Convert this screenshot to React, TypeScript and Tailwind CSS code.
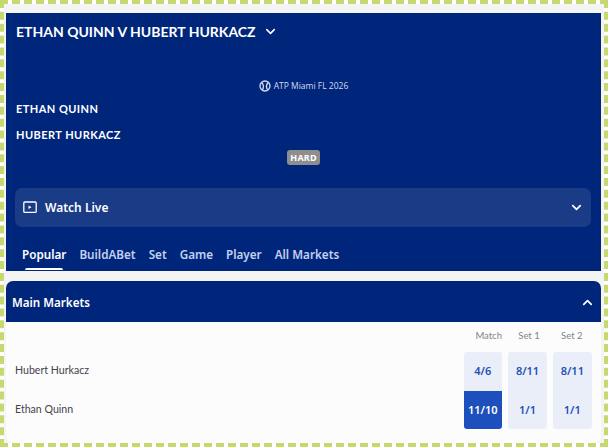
import React from 'react';
import { ChevronDown, ChevronUp } from 'lucide-react';

const tabs = ['Popular', 'BuildABet', 'Set', 'Game', 'Player', 'All Markets'];

const rows = [
  { name: 'Hubert Hurkacz', prices: ['4/6', '8/11', '8/11'] },
  { name: 'Ethan Quinn', prices: ['11/10', '1/1', '1/1'] },
];

const headers = [
  { label: 'Match', inset: 'pr-0' },
  { label: 'Set 1', inset: 'pr-[7px]' },
  { label: 'Set 2', inset: 'pr-[9px]' },
];

const App = () => {
  return (
    <div className="h-[447px] w-[608px] overflow-hidden border-[4px] border-dashed border-[#c6d96e] bg-white font-['Noto_Sans',sans-serif]">
      <div className="flex h-full flex-col bg-[#f4f4f4] pt-[9px] pl-[2px] pr-[3px]">
        <div className="h-[258px] bg-[#00267b] pl-[10px] pr-[10px] text-white">
          <div className="flex h-[36px] items-center pt-[1px]">
            <h1 className="font-['Lato',sans-serif] text-[14px] font-bold">ETHAN QUINN V HUBERT HURKACZ</h1>
            <ChevronDown size={15} strokeWidth={2.5} className="ml-[7px]" />
          </div>
          <div className="mt-[31px] flex items-center justify-center gap-[3px] font-['Open_Sans',sans-serif] text-[8.5px] text-[#d3dcf2]">
            <svg width="12" height="12" viewBox="0 0 12 12" fill="none" stroke="#d3dcf2" strokeWidth="1.3">
              <circle cx="6" cy="6" r="5" />
              <path d="M2.5 2.5c2 1.5 2.5 4 1 7.5M9.5 2.2C7.5 4 7 7 8.5 9.8" />
            </svg>
            <span>ATP Miami FL 2026</span>
          </div>
          <div className="mt-[3px] font-['Lato',sans-serif] text-[11px] font-bold leading-[26px] tracking-[0.45px]">
            <div>ETHAN QUINN</div>
            <div>HUBERT HURKACZ</div>
          </div>
          <div className="mt-[2px] flex justify-center">
            <span className="rounded-[3px] bg-[#8e8e8e] px-[3px] text-[9px] font-bold leading-[15px] tracking-[0.2px]">HARD</span>
          </div>
          <div className="mt-[23px] -ml-[1px] flex h-[39px] items-center justify-between rounded-[7px] bg-[#1a3b85] pl-[8px] pr-[7px] pt-[1px]">
            <div className="flex items-center gap-[8px]">
              <svg width="14" height="13" viewBox="0 0 14 13" fill="none">
                <rect x="0.8" y="1" width="12.4" height="10.4" rx="1" stroke="white" strokeWidth="1.3" />
                <path d="M5.5 4.4l3 1.8-3 1.8z" fill="white" />
              </svg>
              <span className="text-[12px] font-semibold">Watch Live</span>
            </div>
            <ChevronDown size={15} strokeWidth={2.8} />
          </div>
          <div className="mt-[11px] flex gap-[13px] pl-[6px] text-[11.7px] font-semibold text-[#c3d1f1]">
            {tabs.map((tab, index) => (
              <div key={tab} className={index === 0 ? 'relative h-[32px] pt-[8px] text-white' : 'h-[32px] pt-[8px]'}>
                {tab}
                {index === 0 && <div className="absolute right-[3px] bottom-[0px] left-[3px] h-[2px] rounded-t bg-white" />}
              </div>
            ))}
          </div>
        </div>

        <div className="mt-[10px] flex-1 overflow-hidden rounded-[7px] bg-[#fcfcfc]">
          <div className="flex h-[41px] items-center justify-between bg-[#00267b] pl-[6px] pr-[6px] pt-[2px] text-white">
            <span className="text-[11.6px] font-semibold">Main Markets</span>
            <ChevronUp size={15} strokeWidth={2.8} />
          </div>
          <div className="grid grid-cols-[1fr_38.4px_38.4px_38.4px] gap-x-[6.4px] pr-[9.5px] pl-[9px]">
            <div className="h-[30px]" />
            {headers.map((h) => (
              <div key={h.label} className={`h-[30px] whitespace-nowrap pt-[7px] text-right font-['Lato',sans-serif] text-[9.5px] text-[#80838a] ${h.inset}`}>{h.label}</div>
            ))}
            {rows.map((row, r) => (
              <React.Fragment key={row.name}>
                <div className="flex h-[38.5px] items-center font-['Lato',sans-serif] text-[10.6px] text-[#41444a]">{row.name}</div>
                {row.prices.map((price, p) => {
                  const selected = r === 1 && p === 0;
                  return (
                    <div
                      key={p}
                      className={`flex h-[38.5px] items-center justify-center text-[11px] font-semibold ${r === 0 ? 'rounded-t-[3px]' : 'rounded-b-[3px]'} ${selected ? 'bg-[#1d50bd] text-white' : 'bg-[#e9eef9] text-[#2351b5]'}`}
                    >
                      {price}
                    </div>
                  );
                })}
              </React.Fragment>
            ))}
          </div>
        </div>
      </div>
    </div>
  );
};

export default App;
